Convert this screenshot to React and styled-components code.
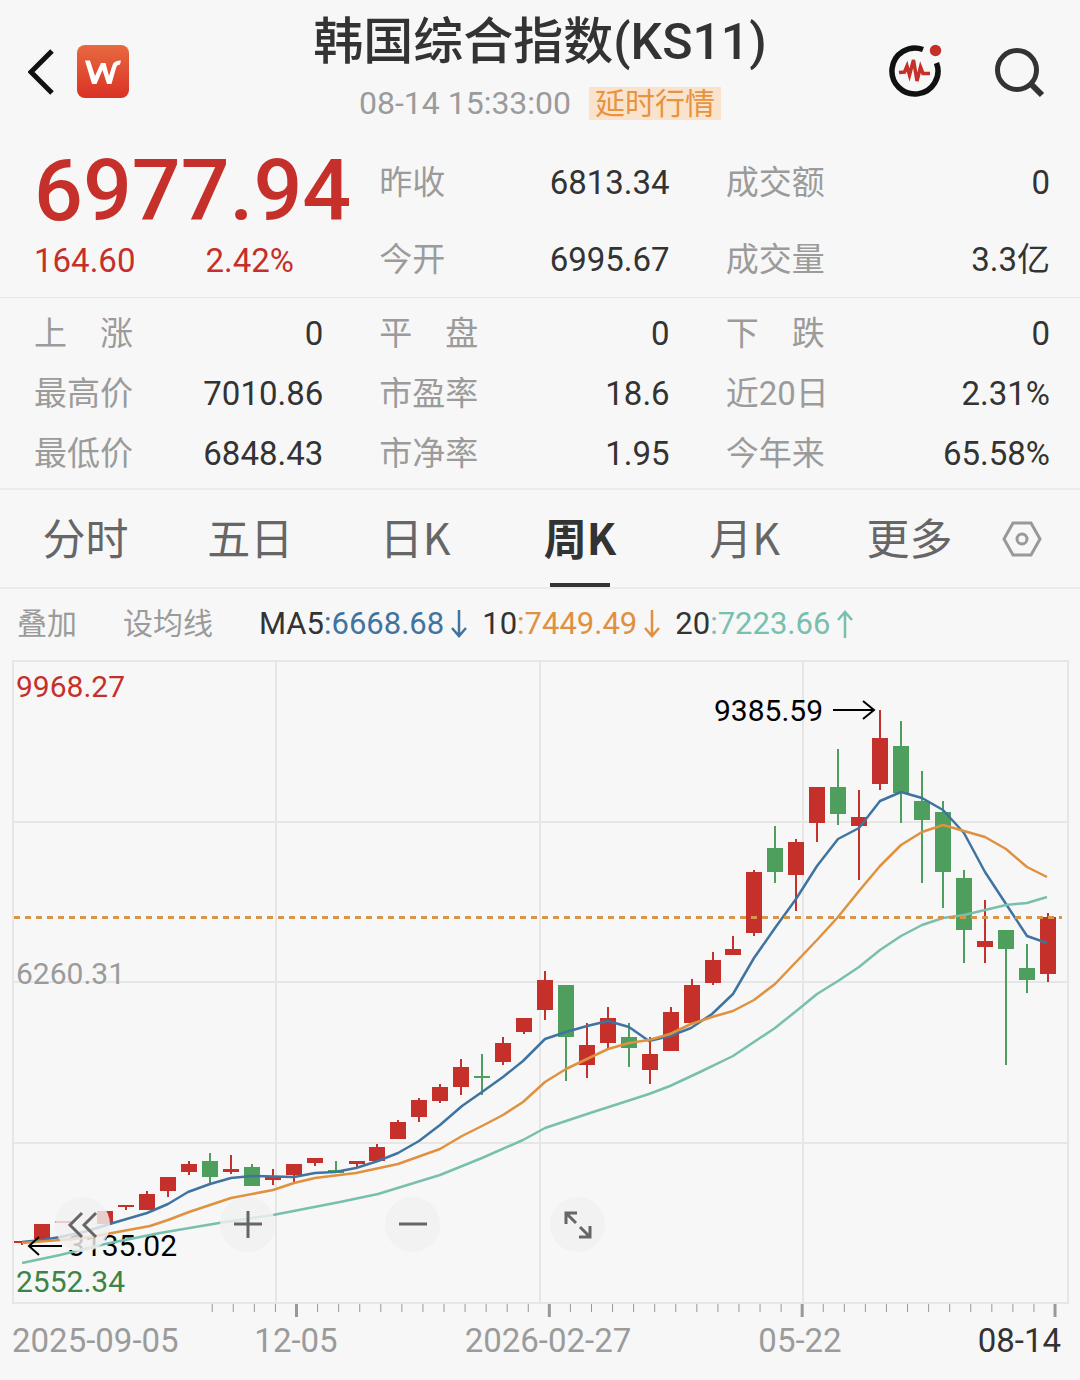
import React from 'react';
import styled, { createGlobalStyle } from 'styled-components';

const GlobalStyle = createGlobalStyle`
  * {
    box-sizing: border-box;
  }

  body {
    margin: 0;
    background-color: #f7f7f7;
    color: #333;
    font-family: Roboto, "Noto Sans CJK SC", sans-serif;
    line-height: 1.2;
  }

  button {
    padding: 0;
    border: 0;
    background: none;
    color: inherit;
    font: inherit;
    cursor: pointer;
  }

  svg {
    display: block;
  }
`;

const Header = styled.header`
  display: grid;
  grid-template-columns: 1fr auto 1fr;
  align-items: center;
  height: 142px;
  padding: 0 28px;
`;

const HeaderSide = styled.div`
  display: flex;
  align-items: center;
  justify-content: ${(props) => (props.$end ? 'flex-end' : 'flex-start')};
  gap: ${(props) => (props.$end ? '52px' : '20px')};
`;

const Heading = styled.div`
  display: flex;
  flex-direction: column;
  align-items: center;
  padding-bottom: 8px;
  white-space: nowrap;
`;

const Title = styled.h1`
  margin: 0;
  font-size: 50px;
  font-weight: 500;
  line-height: 72px;
`;

const Updated = styled.div`
  display: flex;
  align-items: center;
  gap: 18px;
  height: 50px;
  color: #9b9b9b;
  font-size: 32px;
`;

const DelayTag = styled.span`
  padding: 0 6px;
  background-color: #fae3cc;
  color: #e8933f;
  font-size: 30px;
  line-height: 33px;
`;

const Quote = styled.section`
  display: grid;
  grid-template-columns: 289fr 290fr 324fr;
  column-gap: 56px;
  height: 155px;
  padding: 2px 30px 0 34px;
`;

const PriceBlock = styled.div`
  min-width: 0;
  color: #c5302b;
  white-space: nowrap;
`;

const Price = styled.div`
  font-size: 86px;
  font-weight: 500;
  line-height: 94px;
`;

const Change = styled.div`
  display: flex;
  gap: 70px;
  font-size: 33px;
  line-height: 46px;
`;

const Stats = styled.section`
  display: grid;
  grid-template-columns: 289fr 290fr 324fr;
  column-gap: 56px;
  padding: 6px 30px 4px 34px;
  border-top: 1px solid #e6e6e6;
`;

const StatList = styled.dl`
  min-width: 0;
  margin: 0;
`;

const Stat = styled.div`
  display: flex;
  align-items: center;
  justify-content: space-between;
  height: ${(props) => (props.$tall ? '77px' : '60px')};
  font-size: 33px;
  white-space: nowrap;

  dt {
    color: #9b9b9b;
  }

  dd {
    margin: 0;
  }
`;

const Tabs = styled.nav`
  display: flex;
  height: 101px;
  padding: 0 28px 0 3px;
  border-top: 2px solid #ebebeb;
  border-bottom: 2px solid #ebebeb;
`;

const Tab = styled.button`
  display: flex;
  flex: 1;
  flex-direction: column;
  align-items: center;
  justify-content: space-between;
  color: ${(props) => (props.$active ? '#333' : '#666')};
  font-family: "Noto Sans CJK SC", sans-serif;
  font-size: 43px;
  font-weight: ${(props) => (props.$active ? 700 : 400)};
  line-height: 93px;

  &::after {
    content: '';
    width: 60px;
    height: 4px;
    background-color: ${(props) => (props.$active ? '#333' : 'transparent')};
  }
`;

const SettingsButton = styled.button`
  display: flex;
  align-items: center;
  justify-content: center;
  width: 60px;
`;

const Averages = styled.div`
  display: flex;
  align-items: center;
  height: 70px;
  padding: 0 17px;
  font-size: 31px;
  white-space: nowrap;
`;

const TextButton = styled.button`
  margin-right: 46px;
  color: #9b9b9b;
  font-size: 30px;
`;

const Average = styled.span`
  display: flex;
  align-items: center;
  margin-right: 14px;
`;

const AverageValue = styled.span`
  display: flex;
  align-items: center;
  gap: 6px;
  color: ${(props) => props.$color};
`;

const ChartWrap = styled.section`
  position: relative;

  > svg {
    width: 100%;
    height: auto;
  }
`;

const ChartText = styled.text`
  fill: ${(props) => props.$color};
  font-size: ${(props) => props.$size || 30}px;
`;

const Controls = styled.div`
  position: absolute;
  bottom: 128px;
  left: 55px;
  display: flex;
  gap: 110px;
`;

const RoundButton = styled.button`
  display: flex;
  align-items: center;
  justify-content: center;
  width: 55px;
  height: 55px;
  border-radius: 50%;
  background-color: rgba(240, 240, 240, 0.82);
`;

const quoteColumns = [
  [
    ['昨收', '6813.34'],
    ['今开', '6995.67'],
  ],
  [
    ['成交额', '0'],
    ['成交量', '3.3亿'],
  ],
];

const statColumns = [
  [
    ['上　涨', '0'],
    ['最高价', '7010.86'],
    ['最低价', '6848.43'],
  ],
  [
    ['平　盘', '0'],
    ['市盈率', '18.6'],
    ['市净率', '1.95'],
  ],
  [
    ['下　跌', '0'],
    ['近20日', '2.31%'],
    ['今年来', '65.58%'],
  ],
];

const tabs = ['分时', '五日', '日K', '周K', '月K', '更多'];

const RED = '#c5302b';
const GREEN = '#4e9f5d';
const BLUE = '#3f74a0';
const ORANGE = '#e0913f';
const TEAL = '#78bfae';

// [colour, wick top, body top, body bottom, wick bottom]
const candles = [
  [RED, 1241, 1241, 1243, 1245],
  [RED, 1224, 1224, 1239, 1239],
  [RED, 1221, 1221, 1223, 1223],
  null,
  [RED, 1211, 1211, 1224, 1224],
  [RED, 1205, 1205, 1207, 1210],
  [RED, 1191, 1194, 1210, 1210],
  [RED, 1177, 1177, 1191, 1197],
  [RED, 1161, 1164, 1172, 1175],
  [GREEN, 1153, 1161, 1177, 1183],
  [RED, 1155, 1169, 1172, 1174],
  [GREEN, 1164, 1167, 1186, 1186],
  [RED, 1169, 1177, 1180, 1185],
  [RED, 1164, 1164, 1175, 1183],
  [RED, 1158, 1158, 1163, 1166],
  [GREEN, 1161, 1170, 1173, 1173],
  [RED, 1161, 1161, 1164, 1167],
  [RED, 1144, 1147, 1161, 1161],
  [RED, 1120, 1122, 1139, 1139],
  [RED, 1098, 1100, 1117, 1122],
  [RED, 1084, 1087, 1101, 1103],
  [RED, 1059, 1067, 1087, 1095],
  [GREEN, 1054, 1076, 1078, 1095],
  [RED, 1037, 1043, 1062, 1065],
  [RED, 1018, 1018, 1032, 1034],
  [RED, 971, 980, 1010, 1020],
  [GREEN, 985, 985, 1037, 1081],
  [RED, 1023, 1045, 1065, 1078],
  [RED, 1007, 1018, 1043, 1048],
  [GREEN, 1023, 1037, 1048, 1067],
  [RED, 1037, 1054, 1070, 1084],
  [RED, 1007, 1012, 1051, 1051],
  [RED, 979, 985, 1023, 1023],
  [RED, 952, 960, 983, 985],
  [RED, 936, 949, 955, 955],
  [RED, 870, 872, 933, 936],
  [GREEN, 826, 848, 872, 883],
  [RED, 839, 842, 875, 911],
  [RED, 787, 787, 823, 842],
  [GREEN, 749, 787, 814, 825],
  [RED, 790, 817, 826, 880],
  [RED, 710, 738, 784, 790],
  [GREEN, 721, 746, 793, 823],
  [GREEN, 771, 801, 820, 883],
  [GREEN, 801, 812, 872, 908],
  [GREEN, 870, 878, 930, 963],
  [RED, 900, 941, 947, 963],
  [GREEN, 930, 930, 949, 1065],
  [GREEN, 944, 968, 980, 993],
  [RED, 913, 917, 974, 982],
];

const averageLines = [
  {
    color: BLUE,
    points:
      '22,1242 42,1240 60,1237 84,1232 113,1223 147,1213 168,1204 188,1192 210,1184 231,1178 252,1176 294,1177 315,1173 335,1172 356,1168 378,1161 398,1153 419,1141 440,1125 462,1106 482,1092 503,1077 523,1061 545,1039 566,1032 587,1026 608,1021 629,1027 649,1041 670,1036 691,1028 712,1014 733,994 754,958 775,928 796,899 817,866 838,839 859,828 880,801 901,792 922,798 943,810 964,833 985,872 1006,904 1027,936 1047,943',
  },
  {
    color: ORANGE,
    points:
      '22,1243 60,1240 84,1238 112,1233 150,1226 168,1220 189,1212 231,1198 273,1190 294,1183 315,1178 356,1173 398,1164 440,1149 462,1136 482,1126 503,1115 523,1102 545,1082 566,1069 587,1059 608,1049 629,1043 649,1040 670,1034 691,1024 712,1017 733,1011 754,1000 775,984 796,962 817,940 838,917 859,891 880,866 901,845 922,832 943,825 964,831 985,837 1006,849 1027,867 1047,877',
  },
  {
    color: TEAL,
    points:
      '22,1263 60,1255 105,1244 160,1233 219,1223 273,1215 340,1202 378,1194 440,1175 482,1158 523,1140 545,1128 587,1114 649,1094 670,1086 700,1072 733,1056 775,1028 800,1008 817,994 838,981 859,967 880,950 901,936 922,925 943,918 964,915 985,910 1006,905 1027,903 1047,897',
  },
];

const dateLabels = [
  [12, 'start', '2025-09-05'],
  [296, 'middle', '12-05'],
  [548, 'middle', '2026-02-27'],
  [800, 'middle', '05-22'],
  [1061, 'end', '08-14'],
];

const ticks = Array.from({ length: 41 }, (_, i) => i - 4);

const BackIcon = () => (
  <svg width="29" height="48" viewBox="0 0 29 48" fill="none">
    <path d="M24 4 L3 25 L24 46" stroke="#111" strokeWidth="5" />
  </svg>
);

const LogoIcon = () => (
  <svg width="52" height="54" viewBox="0 0 52 54">
    <defs>
      <linearGradient id="logoFill" x1="0" y1="0" x2="0" y2="1">
        <stop offset="0" stopColor="#e8693f" />
        <stop offset="1" stopColor="#d93226" />
      </linearGradient>
    </defs>
    <rect y="1" width="52" height="53" rx="8" fill="url(#logoFill)" />
    <path
      d="M8 16.500 H13 L18 32 L24 19 H28.500 L32 32 L35.500 21 Q37 16.500 44 16.500 L43 20.500 Q40 20.500 39.300 23 L34.500 40 H30 L25.500 26 L19.500 40 H15 Z"
      fill="#fff"
    />
  </svg>
);

const PulseIcon = () => (
  <svg width="54" height="56" viewBox="0 0 54 56" fill="none">
    <path d="M35 6.500 A23 23 0 1 0 48.500 20" stroke="#111" strokeWidth="5.500" />
    <path
      d="M11 29.500 L16.500 29 L19 23 L21.500 32 L25.500 17 L29 38 L32.500 24 L35 30.500 L42 30.500"
      stroke={RED}
      strokeWidth="3.500"
    />
    <circle cx="47.500" cy="7.500" r="5.700" fill={RED} />
  </svg>
);

const SearchIcon = () => (
  <svg width="58" height="56" viewBox="0 0 58 56" fill="none" stroke="#333" strokeWidth="5">
    <circle cx="23" cy="27" r="19.500" />
    <path d="M37 41 L48 52" strokeWidth="6" />
  </svg>
);

const SettingsIcon = () => (
  <svg width="40" height="36" viewBox="0 0 40 36" fill="none" stroke="#999" strokeWidth="3">
    <path d="M11 2 H29 L38 18 L29 34 H11 L2 18 Z" />
    <circle cx="20" cy="18" r="5" />
  </svg>
);

const TrendArrow = ({ up }) => (
  <svg width="18" height="28" viewBox="0 0 18 28" fill="none" stroke="currentColor" strokeWidth="2.500">
    <path d={up ? 'M9 28 V2 M2 10 L9 2 L16 10' : 'M9 0 V26 M2 18 L9 26 L16 18'} />
  </svg>
);

const ControlIcon = ({ d }) => (
  <svg width="32" height="32" viewBox="0 0 32 32" fill="none" stroke="#666" strokeWidth="3">
    <path d={d} />
  </svg>
);

const StatRows = ({ rows, tall }) => (
  <StatList>
    {rows.map(([label, value]) => (
      <Stat key={label} $tall={tall}>
        <dt>{label}</dt>
        <dd>{value}</dd>
      </Stat>
    ))}
  </StatList>
);

const Chart = () => (
  <svg viewBox="0 659 1080 721" role="img" aria-label="周K">
    <g stroke="#e6e6e6" strokeWidth="2" fill="none">
      <rect x="13" y="661" width="1055" height="642" />
      {[822, 982, 1143].map((y) => (
        <path key={y} d={`M13 ${y} H1068`} />
      ))}
      {[276, 540, 803].map((x) => (
        <path key={x} d={`M${x} 661 V1303`} />
      ))}
    </g>

    {ticks.map((i) => (
      <rect
        key={i}
        x={296 + i * 21.07 - (i % 12 === 0 ? 1 : 0)}
        y="1304"
        width={i % 12 === 0 ? 3 : 1}
        height={i % 12 === 0 ? 13 : 8}
        fill="#999"
      />
    ))}

    <ChartText x="16" y="697" $color="#c5302b">9968.27</ChartText>
    <ChartText x="16" y="984" $color="#9b9b9b">6260.31</ChartText>
    <ChartText x="16" y="1292" $color="#3c8546">2552.34</ChartText>
    <ChartText x="714" y="721" $color="#000">9385.59</ChartText>
    <ChartText x="68" y="1256" $color="#000">3135.02</ChartText>

    {candles.map((candle, i) => {
      if (!candle) return null;
      const [color, high, top, bottom, low] = candle;
      const x = Math.round(21.5 + i * 20.94);
      return (
        <g key={i} fill={color}>
          <rect x={x - 1} y={high} width="2" height={low - high} />
          <rect x={x - 8} y={top} width="16" height={bottom - top} />
        </g>
      );
    })}

    {averageLines.map((line) => (
      <polyline
        key={line.color}
        points={line.points}
        fill="none"
        stroke={line.color}
        strokeWidth="2.500"
        strokeLinejoin="round"
      />
    ))}

    <path d="M14 917.500 H1062" stroke="#d8954a" strokeWidth="3" strokeDasharray="6 5" />
    <path d="M833 710 H874 M863 701 L874 710 L863 719" fill="none" stroke="#000" strokeWidth="2" />
    <path d="M62 1246 H30 M39 1237 L29 1246 L39 1255" fill="none" stroke="#000" strokeWidth="2" />

    {dateLabels.map(([x, anchor, text]) => (
      <ChartText
        key={text}
        x={x}
        y="1352"
        textAnchor={anchor}
        $size={33}
        $color={anchor === 'end' ? '#333' : '#9b9b9b'}
      >
        {text}
      </ChartText>
    ))}
  </svg>
);

const App = () => {
  return (
    <main>
      <GlobalStyle />
      <Header>
        <HeaderSide>
          <button type="button" aria-label="返回">
            <BackIcon />
          </button>
          <LogoIcon />
        </HeaderSide>
        <Heading>
          <Title>韩国综合指数(KS11)</Title>
          <Updated>
            08-14 15:33:00
            <DelayTag>延时行情</DelayTag>
          </Updated>
        </Heading>
        <HeaderSide $end>
          <button type="button" aria-label="诊断">
            <PulseIcon />
          </button>
          <button type="button" aria-label="搜索">
            <SearchIcon />
          </button>
        </HeaderSide>
      </Header>

      <Quote>
        <PriceBlock>
          <Price>6977.94</Price>
          <Change>
            <span>164.60</span>
            <span>2.42%</span>
          </Change>
        </PriceBlock>
        {quoteColumns.map((rows) => (
          <StatRows key={rows[0][0]} rows={rows} tall />
        ))}
      </Quote>

      <Stats>
        {statColumns.map((rows) => (
          <StatRows key={rows[0][0]} rows={rows} />
        ))}
      </Stats>

      <Tabs>
        {tabs.map((tab) => (
          <Tab key={tab} type="button" $active={tab === '周K'}>
            {tab}
          </Tab>
        ))}
        <SettingsButton type="button" aria-label="设置">
          <SettingsIcon />
        </SettingsButton>
      </Tabs>

      <Averages>
        <TextButton type="button">叠加</TextButton>
        <TextButton type="button">设均线</TextButton>
        <Average>
          MA5
          <AverageValue $color={BLUE}>:6668.68<TrendArrow /></AverageValue>
        </Average>
        <Average>
          10
          <AverageValue $color={ORANGE}>:7449.49<TrendArrow /></AverageValue>
        </Average>
        <Average>
          20
          <AverageValue $color={TEAL}>:7223.66<TrendArrow up /></AverageValue>
        </Average>
      </Averages>

      <ChartWrap>
        <Chart />
        <Controls>
          <RoundButton type="button" aria-label="向左">
            <ControlIcon d="M15 4 L3 16 L15 28 M29 4 L17 16 L29 28" />
          </RoundButton>
          <RoundButton type="button" aria-label="放大">
            <ControlIcon d="M16 2 V29 M2 15 H30" />
          </RoundButton>
          <RoundButton type="button" aria-label="缩小">
            <ControlIcon d="M2 15 H30" />
          </RoundButton>
          <RoundButton type="button" aria-label="全屏">
            <ControlIcon d="M4 15 V4 H15 M4 4 L14 14 M28 17 V28 H17 M28 28 L18 18" />
          </RoundButton>
        </Controls>
      </ChartWrap>
    </main>
  );
};

export default App;
